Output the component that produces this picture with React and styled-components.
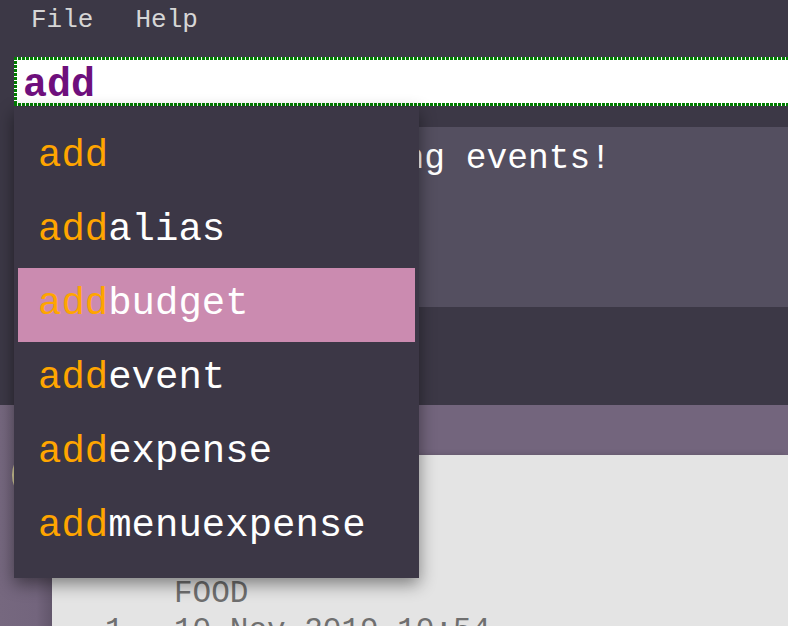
import React from 'react';
import styled, { createGlobalStyle } from 'styled-components';

const GlobalStyle = createGlobalStyle`
  html, body {
    margin: 0;
    padding: 0;
    background: #3c3846;
  }
`;

const MONO = `"Liberation Mono", "Courier New", monospace`;
const DOTS_X = 'repeating-linear-gradient(90deg, #007d00 0 3px, transparent 3px 4px)';
const DOTS_Y = 'repeating-linear-gradient(180deg, #007d00 0 3px, transparent 3px 4px)';

const Window = styled.div`
  position: relative;
  height: 626px;
  overflow: hidden;
  display: flex;
  flex-direction: column;
  background: #3c3846;
  font-family: ${MONO};

  & > * {
    flex-shrink: 0;
  }
`;

const MenuBar = styled.div`
  display: flex;
  height: 57px;
  box-sizing: border-box;
  padding: 7px 0 0 31px;
  gap: 42px;
`;

const MenuItem = styled.span`
  font-size: 26px;
  line-height: 1;
  color: #d6d6d6;
`;

// dotted green focus border drawn as crisp dots
const CommandBox = styled.div`
  margin-left: 14px;
  margin-right: -4px;
  height: 49px;
  box-sizing: border-box;
  background:
    ${DOTS_X} top left / 100% 3px no-repeat,
    ${DOTS_X} bottom left / 100% 3px no-repeat,
    ${DOTS_Y} top left / 3px 100% no-repeat,
    #ffffff;
  padding: 9px 0 0 9px;
  font-size: 40px;
  line-height: 1;
  font-weight: bold;
  color: #6e0f7c;
`;

const ResultPanel = styled.div`
  margin: 21px 0 0 14px;
  height: 180px;
  box-sizing: border-box;
  background: #544f60;
  padding: 15px 0 0 16px;
  font-size: 34.6px;
  line-height: 1;
  color: #ffffff;
  white-space: pre;
`;

const StatusArea = styled.div`
  height: 98px;
`;

const Bottom = styled.div`
  flex: 1 1 auto;
  min-height: 0;
  overflow: hidden;
  display: flex;
  background: #73657d;
`;

const Sidebar = styled.div`
  position: relative;
  width: 52px;
  flex-shrink: 0;
  background: linear-gradient(90deg, #76687f 0%, #73657d 70%, #62566b 100%);
`;

const Avatar = styled.div`
  position: absolute;
  left: 12px;
  top: 42px;
  width: 56px;
  height: 56px;
  border-radius: 50%;
  border: 2px solid #d9cf9c;
  box-sizing: border-box;
  background: #8b7d8f;
`;

const MainColumn = styled.div`
  flex: 1;
  display: flex;
  flex-direction: column;
`;

const TabHeader = styled.div`
  height: 50px;
  flex-shrink: 0;
`;

const ListPanel = styled.div`
  flex: 1;
  background: #e4e4e4;
  padding: 120px 0 0 53px;
  box-shadow: -3px 0 6px rgba(0, 0, 0, 0.18);
`;

const Entry = styled.div`
  display: grid;
  grid-template-columns: 69px 1fr;
  font-size: 31px;
  line-height: 37px;
  color: #6f6f6f;
  white-space: pre;
`;

const Dropdown = styled.div`
  position: absolute;
  left: 14px;
  top: 107px;
  width: 405px;
  height: 471px;
  box-sizing: border-box;
  padding: 13px 4px 0;
  background: #3c3746;
  box-shadow: 0 6px 16px rgba(0, 0, 0, 0.45);
`;

const Suggestion = styled.div`
  height: 74px;
  box-sizing: border-box;
  padding: 17px 0 0 20px;
  font-size: 39px;
  line-height: 1;
  color: #ffffff;
  background: ${(p) => (p.$active ? '#cb8bb0' : 'transparent')};
`;

const Match = styled.span`
  color: #ffa500;
`;

const suggestions = ['add', 'addalias', 'addbudget', 'addevent', 'addexpense', 'addmenuexpense'];

export default function App() {
  const typed = 'add';
  return (
    <>
      <GlobalStyle />
      <Window>
        <MenuBar>
          <MenuItem>File</MenuItem>
          <MenuItem>Help</MenuItem>
        </MenuBar>
        <CommandBox>{typed}</CommandBox>
        <ResultPanel>{'Hello! Start logging events!'}</ResultPanel>
        <StatusArea />
        <Bottom>
          <Sidebar>
            <Avatar />
          </Sidebar>
          <MainColumn>
            <TabHeader />
            <ListPanel>
              <Entry>
                <span />
                <span>FOOD</span>
                <span>1</span>
                <span>10 Nov 2019 10:54</span>
              </Entry>
            </ListPanel>
          </MainColumn>
        </Bottom>
        <Dropdown>
          {suggestions.map((s) => (
            <Suggestion key={s} $active={s === 'addbudget'}>
              <Match>{s.slice(0, typed.length)}</Match>
              {s.slice(typed.length)}
            </Suggestion>
          ))}
        </Dropdown>
      </Window>
    </>
  );
}
